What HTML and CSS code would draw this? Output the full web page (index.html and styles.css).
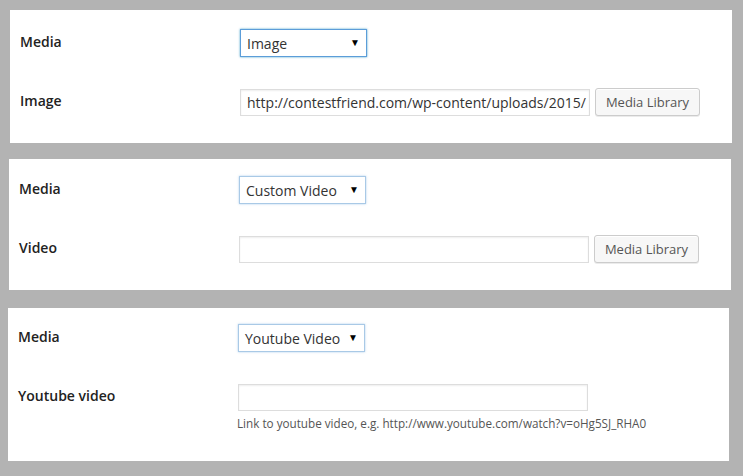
FILE: index.html
```html
<!DOCTYPE html>
<html>
<head>
<meta charset="utf-8">
<link rel="stylesheet" href="styles.css">
</head>
<body>
<div class="page">
  <section class="panel panel-1">
    <div class="row">
      <div class="label">Media</div>
      <div class="control">
        <div class="select focus"><span>Image</span><span class="arrow">▼</span></div>
      </div>
    </div>
    <div class="row">
      <div class="label">Image</div>
      <div class="control">
        <div class="input"><span class="val">http://contestfriend.com/wp-content/uploads/2015/</span></div>
        <button class="btn">Media Library</button>
      </div>
    </div>
  </section>

  <section class="panel panel-2">
    <div class="row">
      <div class="label">Media</div>
      <div class="control">
        <div class="select focus-soft"><span>Custom Video</span><span class="arrow">▼</span></div>
      </div>
    </div>
    <div class="row">
      <div class="label">Video</div>
      <div class="control">
        <div class="input"></div>
        <button class="btn">Media Library</button>
      </div>
    </div>
  </section>

  <section class="panel panel-3">
    <div class="row">
      <div class="label">Media</div>
      <div class="control">
        <div class="select focus-soft"><span>Youtube Video</span><span class="arrow">▼</span></div>
      </div>
    </div>
    <div class="row">
      <div class="label">Youtube video</div>
      <div class="control">
        <div class="input"></div>
      </div>
    </div>
    <p class="desc">Link to youtube video, e.g. http://www.youtube.com/watch?v=oHg5SJ_RHA0</p>
  </section>
</div>
</body>
</html>
```

FILE: styles.css
```css
html, body {
  margin: 0;
  padding: 0;
  background: #b3b3b3;
}
body {
  font-family: "Open Sans", "Liberation Sans", sans-serif;
  color: #222;
  width: 743px;
  height: 476px;
  overflow: hidden;
}
.page {
  display: flex;
  flex-direction: column;
}
.panel {
  background: #fff;
  display: flex;
  flex-direction: column;
  gap: 31px;
  padding-left: 10px;
  box-sizing: border-box;
}
.panel-1 {
  margin: 10px 0 0 10px;
  width: 722px;
  height: 133px;
  padding-top: 19px;
}
.panel-2 {
  margin: 16px 0 0 9px;
  width: 722px;
  height: 131px;
  padding-top: 17px;
}
.panel-3 {
  margin: 18px 0 0 8px;
  width: 721px;
  height: 153px;
  padding-top: 16px;
  padding-left: 10px;
}
.row {
  display: flex;
  align-items: center;
  height: 28px;
}
.label {
  width: 220px;
  font-size: 14px;
  font-weight: 600;
  color: #222;
  line-height: 18px;
  margin-top: -2px;
}
.control {
  display: flex;
  align-items: center;
  gap: 5px;
}
.select {
  width: 127px;
  height: 28px;
  box-sizing: border-box;
  border: 1px solid #ddd;
  background: #fff;
  display: flex;
  align-items: center;
  justify-content: space-between;
  padding: 0 6px 0 6px;
  font-size: 14px;
  color: #333;
}
.select span:first-child {
  margin-top: 1px;
}
.select.focus {
  border-color: #5b9dd9;
  box-shadow: 0 0 2px rgba(30, 140, 190, .8);
}
.select.focus-soft {
  border-color: #a9c9e6;
  box-shadow: 0 0 2px rgba(91, 157, 217, .5);
}
.arrow {
  font-size: 10px;
  color: #000;
  margin-top: -2px;
}
.input {
  width: 350px;
  height: 27px;
  box-sizing: border-box;
  border: 1px solid #ddd;
  box-shadow: inset 0 1px 2px rgba(0, 0, 0, .07);
  background: #fff;
  overflow: hidden;
  white-space: nowrap;
  font-size: 14px;
  color: #333;
  padding: 0 6px;
  display: flex;
  align-items: center;
}
.btn {
  width: 105px;
  height: 28px;
  box-sizing: border-box;
  border: 1px solid #ccc;
  border-radius: 3px;
  background: #f7f7f7;
  box-shadow: inset 0 1px 0 #fff, 0 1px 0 rgba(0, 0, 0, .08);
  font-family: "Open Sans", "Liberation Sans", sans-serif;
  font-size: 13px;
  color: #555;
  padding: 0;
  margin-top: -1px;
}
.desc {
  margin: -27px 0 0 219px;
  font-size: 11.7px;
  color: #555;
  line-height: 16px;
}
```
